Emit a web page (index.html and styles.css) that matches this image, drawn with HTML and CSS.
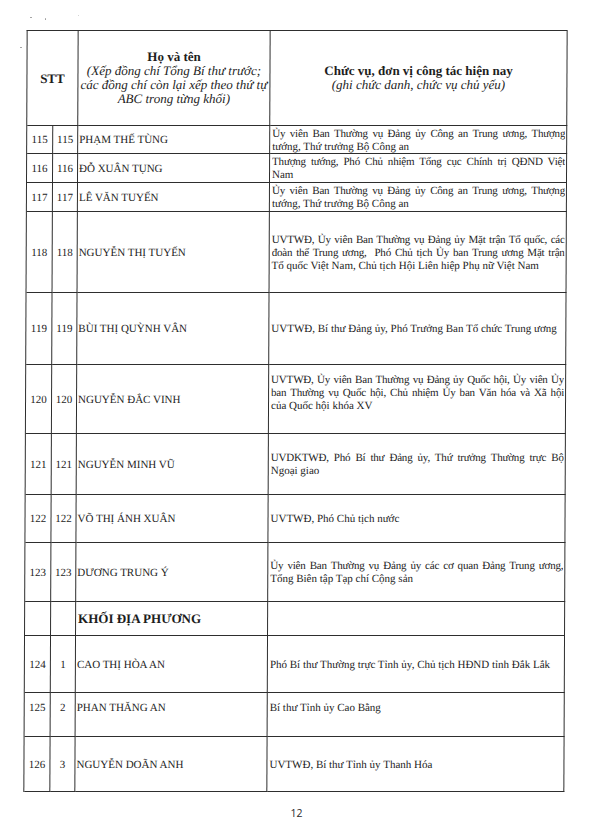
FILE: index.html
```html
<!DOCTYPE html>
<html lang="vi">
<head>
<meta charset="utf-8">
<title>Danh sách - trang 12</title>
<link rel="stylesheet" href="styles.css">
</head>
<body>
<div class="page">
  <span class="speck s1"></span>
  <span class="speck s2"></span>
  <span class="speck s3"></span>
  <span class="speck s4"></span>

  <div class="table">
    <div class="row head">
      <div class="cell stt">STT</div>
      <div class="cell hcol">
        <span class="ln hb">Họ và tên</span>
        <span class="ln hi">(Xếp đồng chí Tổng Bí thư trước;</span>
        <span class="ln hi">các đồng chí còn lại xếp theo thứ tự</span>
        <span class="ln hi">ABC trong từng khối)</span>
      </div>
      <div class="cell hcol">
        <span class="ln hb">Chức vụ, đơn vị công tác hiện nay</span>
        <span class="ln hi">(ghi chức danh, chức vụ chủ yếu)</span>
      </div>
    </div>

    <div class="row h28">
      <div class="cell num">115</div><div class="cell num">115</div>
      <div class="cell name">PHẠM THẾ TÙNG</div>
      <div class="cell pos"><span class="ln j">Ủy viên Ban Thường vụ Đảng ủy Công an Trung ương, Thượng</span><span class="ln">tướng, Thứ trưởng Bộ Công an</span></div>
    </div>
    <div class="row h29">
      <div class="cell num">116</div><div class="cell num">116</div>
      <div class="cell name">ĐỖ XUÂN TỤNG</div>
      <div class="cell pos"><span class="ln j">Thượng tướng, Phó Chủ nhiệm Tổng cục Chính trị QĐND Việt</span><span class="ln">Nam</span></div>
    </div>
    <div class="row h29">
      <div class="cell num">117</div><div class="cell num">117</div>
      <div class="cell name">LÊ VĂN TUYẾN</div>
      <div class="cell pos"><span class="ln j">Ủy viên Ban Thường vụ Đảng ủy Công an Trung ương, Thượng</span><span class="ln">tướng, Thứ trưởng Bộ Công an</span></div>
    </div>
    <div class="row h81">
      <div class="cell num">118</div><div class="cell num">118</div>
      <div class="cell name">NGUYỄN THỊ TUYẾN</div>
      <div class="cell pos"><span class="ln j">UVTWĐ, Ủy viên Ban Thường vụ Đảng ủy Mặt trận Tổ quốc, các</span><span class="ln j">đoàn thể Trung ương,&nbsp; Phó Chủ tịch Ủy ban Trung ương Mặt trận</span><span class="ln">Tổ quốc Việt Nam, Chủ tịch Hội Liên hiệp Phụ nữ Việt Nam</span></div>
    </div>
    <div class="row h72">
      <div class="cell num">119</div><div class="cell num">119</div>
      <div class="cell name">BÙI THỊ QUỲNH VÂN</div>
      <div class="cell pos"><span class="ln">UVTWĐ, Bí thư Đảng ủy, Phó Trưởng Ban Tổ chức Trung ương</span></div>
    </div>
    <div class="row h69">
      <div class="cell num">120</div><div class="cell num">120</div>
      <div class="cell name">NGUYỄN ĐẮC VINH</div>
      <div class="cell pos raised"><span class="ln j">UVTWĐ, Ủy viên Ban Thường vụ Đảng ủy Quốc hội, Ủy viên Ủy</span><span class="ln j">ban Thường vụ Quốc hội, Chủ nhiệm Ủy ban Văn hóa và Xã hội</span><span class="ln">của Quốc hội khóa XV</span></div>
    </div>
    <div class="row h61">
      <div class="cell num">121</div><div class="cell num">121</div>
      <div class="cell name">NGUYỄN MINH VŨ</div>
      <div class="cell pos"><span class="ln j">UVDKTWĐ, Phó Bí thư Đảng ủy, Thứ trưởng Thường trực Bộ</span><span class="ln">Ngoại giao</span></div>
    </div>
    <div class="row h48">
      <div class="cell num">122</div><div class="cell num">122</div>
      <div class="cell name">VÕ THỊ ÁNH XUÂN</div>
      <div class="cell pos"><span class="ln">UVTWĐ, Phó Chủ tịch nước</span></div>
    </div>
    <div class="row h59">
      <div class="cell num">123</div><div class="cell num">123</div>
      <div class="cell name">DƯƠNG TRUNG Ý</div>
      <div class="cell pos"><span class="ln j">Ủy viên Ban Thường vụ Đảng ủy các cơ quan Đảng Trung ương,</span><span class="ln">Tổng Biên tập Tạp chí Cộng sản</span></div>
    </div>
    <div class="row h34">
      <div class="cell num"></div><div class="cell num"></div>
      <div class="cell name group">KHỐI ĐỊA PHƯƠNG</div>
      <div class="cell pos"></div>
    </div>
    <div class="row h57">
      <div class="cell num">124</div><div class="cell num">1</div>
      <div class="cell name">CAO THỊ HÒA AN</div>
      <div class="cell pos"><span class="ln">Phó Bí thư Thường trực Tỉnh ủy, Chủ tịch HĐND tỉnh Đắk Lắk</span></div>
    </div>
    <div class="row h44 raised-row">
      <div class="cell num">125</div><div class="cell num">2</div>
      <div class="cell name">PHAN THĂNG AN</div>
      <div class="cell pos"><span class="ln">Bí thư Tỉnh ủy Cao Bằng</span></div>
    </div>
    <div class="row h55">
      <div class="cell num">126</div><div class="cell num">3</div>
      <div class="cell name">NGUYỄN DOÃN ANH</div>
      <div class="cell pos"><span class="ln">UVTWĐ, Bí thư Tỉnh ủy Thanh Hóa</span></div>
    </div>
  </div>

  <div class="pagenum">12</div>
</div>
</body>
</html>
```
FILE: styles.css
```css
* { box-sizing: border-box; }

html, body {
  margin: 0;
  padding: 0;
  background: #ffffff;
}

body {
  width: 593px;
  height: 840px;
  overflow: hidden;
  font-family: "Liberation Serif", "Times New Roman", serif;
  color: #1d1d1d;
}

.page {
  position: relative;
  width: 593px;
  height: 840px;
  padding-top: 30px;
}

.speck {
  position: absolute;
  width: 2px;
  height: 1px;
  background: #9a9a9a;
  border-radius: 1px;
}
.s1 { left: 30px; top: 17px; }
.s2 { left: 45px; top: 18px; height: 2px; width: 1px; }
.s3 { left: 20px; top: 47px; }
.s4 { left: 78px; top: 15px; width: 1px; background: #c8c8c8; }

.table {
  width: 541px;
  margin-left: 25px;
  border-top: 1px solid #2e2e2e;
  border-left: 1px solid #2e2e2e;
  transform: skewX(-0.25deg);
}

.row {
  display: grid;
  grid-template-columns: 26px 25px 192px 297px;
}

.cell {
  border-right: 1px solid #2e2e2e;
  border-bottom: 1px solid #2e2e2e;
  display: flex;
  flex-direction: column;
  justify-content: center;
  font-size: 11px;
  line-height: 13px;
  min-width: 0;
}

.head { height: 95px; }
.h28 { height: 28px; }
.h29 { height: 29px; }
.h34 { height: 34px; }
.h44 { height: 44px; }
.h48 { height: 48px; }
.h55 { height: 55px; }
.h57 { height: 57px; }
.h59 { height: 59px; }
.h61 { height: 61px; }
.h69 { height: 69px; }
.h72 { height: 72px; }
.h81 { height: 81px; }

.stt {
  grid-column: span 2;
  align-items: center;
  font-weight: bold;
  font-size: 13px;
}

.hcol {
  align-items: center;
  text-align: center;
  line-height: 14px;
}

.hb {
  font-weight: bold;
  font-size: 13px;
}

.hi {
  font-style: italic;
  font-size: 13px;
}

.ln { display: block; white-space: nowrap; }

.num {
  align-items: center;
  text-align: center;
}

.name {
  padding-left: 1px;
  white-space: nowrap;
}

.group {
  font-weight: bold;
  font-size: 13px;
  padding-left: 2px;
}

.pos {
  padding: 0 1px 0 2px;
}

.j {
  text-align: justify;
  text-align-last: justify;
  letter-spacing: -0.2px;
  overflow: hidden;
}

.raised { padding-bottom: 14px; }
.raised-row .cell { padding-bottom: 14px; }

.pagenum {
  margin-top: 14px;
  text-align: center;
  font-family: "Open Sans", "Liberation Sans", sans-serif;
  font-size: 10.5px;
  line-height: 14px;
  color: #2a2a2a;
}
```
